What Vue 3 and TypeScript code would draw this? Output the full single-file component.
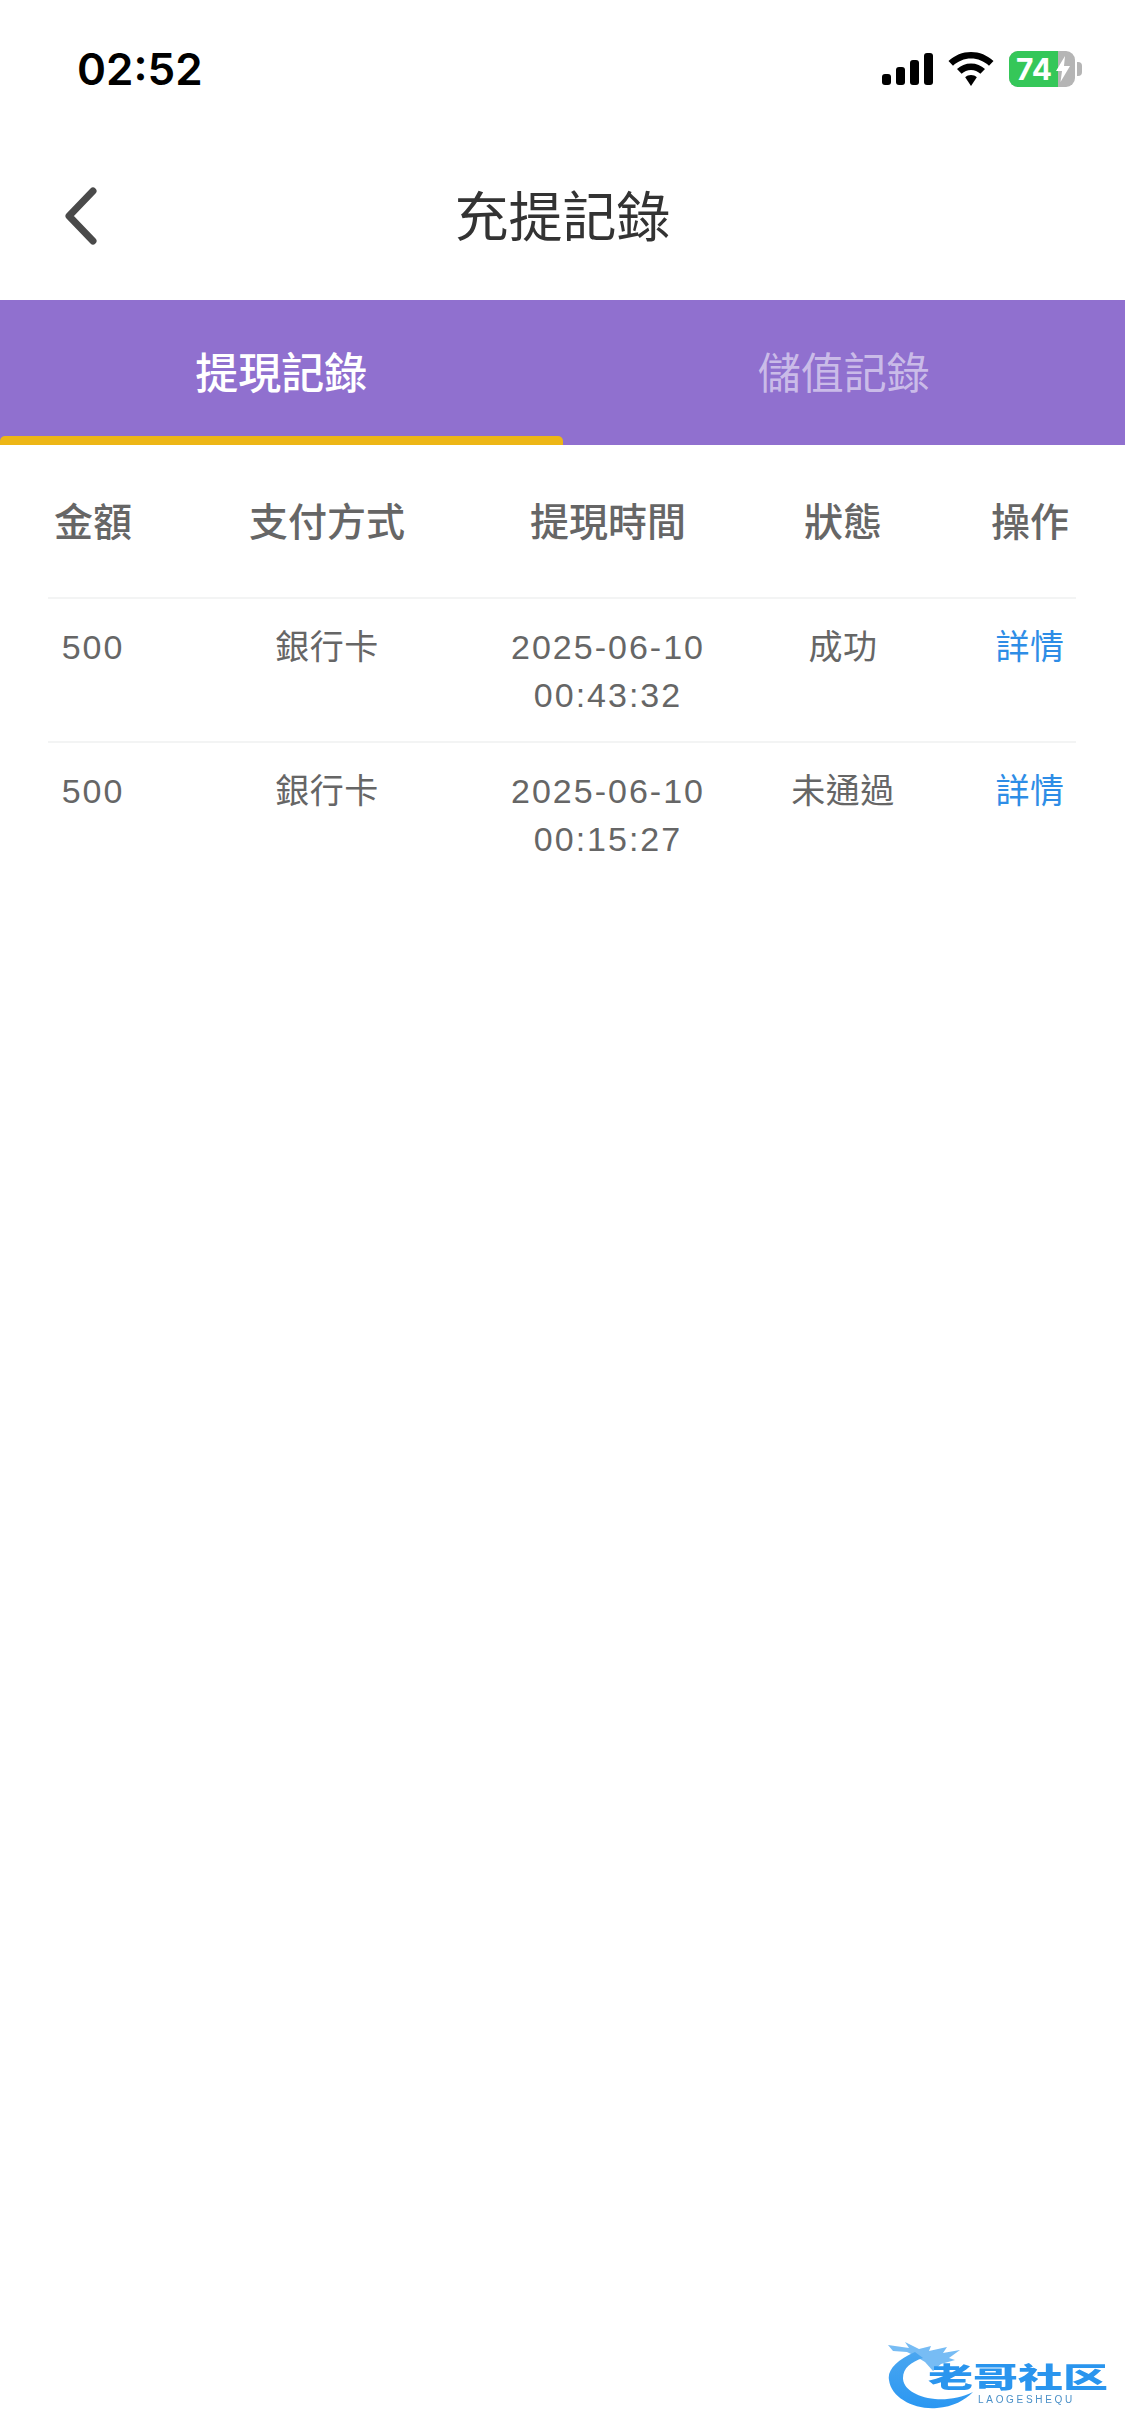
<script setup lang="ts">
import { ref } from 'vue';

interface WithdrawRow {
  amount: string;
  method: string;
  date: string;
  time: string;
  status: string;
}

const tabs = ['提現記錄', '儲值記錄'];
const activeTab = ref(0);

const columns = ['金額', '支付方式', '提現時間', '狀態', '操作'];

const rows: WithdrawRow[] = [
  { amount: '500', method: '銀行卡', date: '2025-06-10', time: '00:43:32', status: '成功' },
  { amount: '500', method: '銀行卡', date: '2025-06-10', time: '00:15:27', status: '未通過' },
];
</script>

<template>
  <div class="page">
    <div class="statusBar">
      <span class="clock">02:52</span>
      <div class="statusIcons">
        <svg class="signal" width="51" height="32" viewBox="0 0 51 32">
          <rect x="0" y="21" width="9" height="11" rx="3" />
          <rect x="14" y="14" width="9" height="18" rx="3" />
          <rect x="28" y="7" width="9" height="25" rx="3" />
          <rect x="42" y="0" width="9" height="32" rx="3" />
        </svg>
        <svg class="wifi" width="46" height="34" viewBox="0 0 46 34">
          <path d="M23 0C14.500 0 6.700 3.300 0.500 9L5 13.800C10 9.200 16.200 6.600 23 6.600S36 9.200 41 13.800L45.500 9C39.300 3.300 31.500 0 23 0Z" />
          <path d="M23 11.500C17.600 11.500 12.800 13.500 9 17L13.600 21.800C16.200 19.500 19.400 18.100 23 18.100S29.800 19.500 32.400 21.800L37 17C33.200 13.500 28.400 11.500 23 11.500Z" />
          <path d="M23 23C20.700 23 18.800 23.800 17.200 25.200L23 34L28.800 25.200C27.200 23.800 25.300 23 23 23Z" />
        </svg>
        <div class="battery">
          <div class="batteryBody">
            <span class="batteryFill"></span>
            <span class="batteryLevel">74</span>
            <svg class="bolt" width="14" height="26" viewBox="0 0 14 26">
              <path d="M9 0L0 15H6L4.500 26L14 10H8Z" />
            </svg>
          </div>
          <span class="batteryCap"></span>
        </div>
      </div>
    </div>

    <div class="navBar">
      <svg class="back" width="36" height="58" viewBox="0 0 36 58">
        <path d="M31 4L7 29L31 54" />
      </svg>
      <h1>充提記錄</h1>
    </div>

    <div class="tabs">
      <div
        v-for="(tab, index) in tabs"
        :key="tab"
        class="tab"
        :class="{ active: index === activeTab }"
        @click="activeTab = index"
      >
        {{ tab }}
      </div>
    </div>

    <div class="table">
      <div class="row head">
        <div v-for="(col, index) in columns" :key="col" :class="`c${index + 1}`">{{ col }}</div>
      </div>
      <div v-for="(row, index) in rows" :key="index" class="row body">
        <div class="c1 num">{{ row.amount }}</div>
        <div class="c2">{{ row.method }}</div>
        <div class="c3 num">{{ row.date }}<br />{{ row.time }}</div>
        <div class="c4">{{ row.status }}</div>
        <div class="c5 link">詳情</div>
      </div>
    </div>

    <div class="watermark">
      <svg class="dragon" width="100" height="75" viewBox="0 0 100 75">
        <defs>
          <linearGradient id="dragonBlue" x1="0" y1="0" x2="0" y2="1">
            <stop offset="0" stop-color="#4aa6f0" />
            <stop offset="1" stop-color="#2a97f2" />
          </linearGradient>
        </defs>
        <path
          d="M30 14C12 22 2 32 4 42C6 60 30 72 52 70C68 69 80 62 88 54C76 60 62 62 50 61C30 59 18 50 18 40C18 30 26 24 38 20Z"
          fill="url(#dragonBlue)"
        />
        <path
          d="M3 7L24 10L20 4L34 11L46 8L44 13L62 9L58 15L75 12L64 20L70 22L56 26L48 33L40 24L30 18L22 14L8 13Z"
          fill="#4aa6f0"
          opacity="0.75"
        />
      </svg>
      <div class="wmName">老哥社区</div>
      <div class="wmSub">LAOGESHEQU</div>
    </div>
  </div>
</template>

<style scoped>
.page {
  position: relative;
  width: 1125px;
  height: 2436px;
  background: #fff;
  overflow: hidden;
  font-family: "Noto Sans CJK TC", "Liberation Sans", sans-serif;
}
.statusBar {
  height: 138px;
  display: flex;
  align-items: center;
  justify-content: space-between;
  padding: 0 43px 0 77px;
}
.clock {
  font-family: Inter, "Liberation Sans", sans-serif;
  font-size: 44px;
  font-weight: 600;
  color: #000;
}
.statusIcons {
  display: flex;
  align-items: center;
  gap: 15px;
}
.signal,
.wifi {
  fill: #000;
}
.battery {
  display: flex;
  align-items: center;
  gap: 2px;
}
.batteryBody {
  position: relative;
  width: 66px;
  height: 36px;
  border-radius: 9px;
  background: #b5b5b5;
  overflow: hidden;
}
.batteryFill {
  position: absolute;
  left: 0;
  top: 0;
  bottom: 0;
  width: 49px;
  background: #35c759;
}
.batteryLevel {
  position: absolute;
  left: 7px;
  top: 0;
  line-height: 36px;
  font-family: Inter, "Liberation Sans", sans-serif;
  font-size: 30px;
  font-weight: 700;
  color: #fff;
}
.bolt {
  position: absolute;
  left: 47px;
  top: 5px;
  fill: #fff;
}
.batteryCap {
  width: 5px;
  height: 14px;
  border-radius: 0 4px 4px 0;
  background: #b5b5b5;
}
.navBar {
  position: relative;
  height: 162px;
  display: flex;
  align-items: center;
  justify-content: center;
  padding-bottom: 12px;
  box-sizing: border-box;
}
.back {
  position: absolute;
  left: 62px;
  top: 49px;
  fill: none;
  stroke: #4a4a4a;
  stroke-width: 7;
  stroke-linecap: round;
  stroke-linejoin: round;
}
h1 {
  margin: 0;
  font-size: 54px;
  font-weight: 400;
  color: #333;
}
.tabs {
  display: flex;
  height: 145px;
  padding-bottom: 5px;
  box-sizing: border-box;
  background: #9070cf;
}
.tab {
  position: relative;
  flex: 1;
  display: flex;
  align-items: center;
  justify-content: center;
  font-size: 43px;
  color: rgba(255, 255, 255, 0.55);
}
.tab.active {
  color: #fff;
  font-weight: 500;
}
.tab.active::after {
  content: "";
  position: absolute;
  left: 0;
  right: 0;
  bottom: -5px;
  height: 9px;
  border-radius: 5px 5px 0 0;
  background: #edb616;
}
.table {
  padding: 0 49px 0 48px;
}
.row {
  display: flex;
  text-align: center;
  white-space: nowrap;
}
.head {
  height: 152px;
  padding-bottom: 4px;
  box-sizing: border-box;
  align-items: center;
  font-size: 39px;
  font-weight: 500;
  color: #666;
}
.body {
  box-sizing: border-box;
  height: 144px;
  padding-top: 24px;
  border-top: 2px solid #f3f4f4;
  font-family: "Liberation Sans", "Noto Sans CJK TC", sans-serif;
  font-size: 34px;
  line-height: 48px;
  letter-spacing: 0.500px;
  color: #666;
}
.num {
  letter-spacing: 2px;
}
.c1 {
  width: 90px;
}
.c2 {
  width: 240px;
  margin-left: 69px;
}
.c3 {
  width: 250px;
  margin-left: 36px;
}
.c4 {
  width: 140px;
  margin-left: 40px;
}
.c5 {
  width: 92px;
  margin-left: 71px;
}
.link {
  color: #2e8de6;
}
.watermark {
  position: absolute;
  left: 885px;
  top: 2338px;
  width: 230px;
  height: 85px;
  filter: blur(0.500px);
}
.dragon {
  position: absolute;
  left: 0;
  top: 0;
}
.wmName {
  position: absolute;
  left: 43px;
  top: 12px;
  font-size: 45px;
  line-height: 52px;
  font-weight: 900;
  color: #2a95ee;
  white-space: nowrap;
  transform: scaleY(0.62);
}
.wmSub {
  position: absolute;
  left: 93px;
  top: 56px;
  font-family: "Liberation Sans", sans-serif;
  font-size: 10px;
  line-height: 12px;
  letter-spacing: 2.700px;
  color: #4a90c8;
  white-space: nowrap;
}
</style>

<style>
html,
body {
  margin: 0;
  background: #fff;
}
</style>
